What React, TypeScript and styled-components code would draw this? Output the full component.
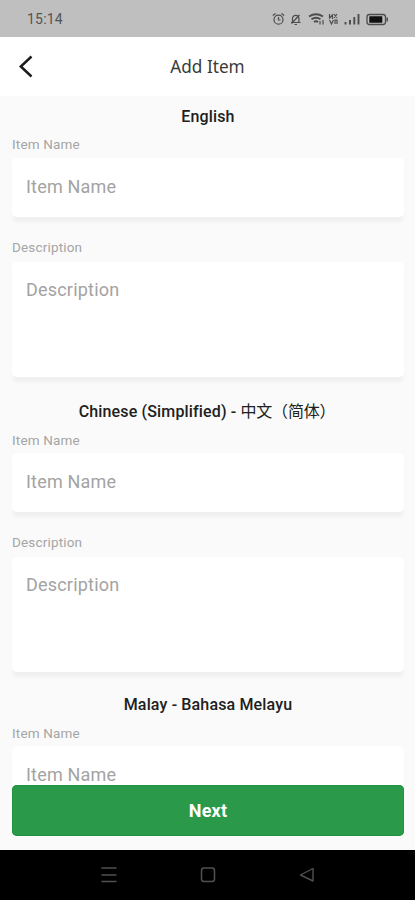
import React from "react";
import styled, { createGlobalStyle } from "styled-components";

const GlobalStyle = createGlobalStyle`
  * { box-sizing: border-box; }
  body { margin: 0; background: #fafafa; }
`;

const Screen = styled.div`
  display: flex;
  flex-direction: column;
  width: 415px;
  height: 900px;
  overflow: hidden;
  background: #fafafa;
  font-family: Roboto, "Noto Sans CJK SC", sans-serif;
`;

const StatusBar = styled.header`
  flex: none;
  display: flex;
  align-items: center;
  justify-content: space-between;
  height: 37px;
  padding: 1px 26px 0 27px;
  background: #bfbfbf;
  color: #545454;
`;

const Clock = styled.span`
  font-size: 14px;
  line-height: 16px;
  letter-spacing: 0.2px;
`;

const StatusIcons = styled.svg`
  display: block;
  width: 118px;
  height: 18px;
`;

const TitleBar = styled.div`
  flex: none;
  display: grid;
  grid-template-columns: 52px 1fr 52px;
  align-items: center;
  height: 59px;
  background: #fff;
`;

const BackButton = styled.button`
  display: flex;
  align-items: center;
  height: 100%;
  padding: 0 0 0 18px;
  border: 0;
  background: none;
`;

const PageTitle = styled.h1`
  margin: 0;
  text-align: center;
  font: 400 17.2px/24px "Noto Sans", sans-serif;
  color: #3a3a3a;
`;

const Form = styled.main`
  flex: 1;
  min-height: 0;
  overflow: hidden;
  padding: 11px 11px 0 12px;
`;

const Section = styled.section<{ $height?: number }>`
  height: ${(p) => (p.$height ? `${p.$height}px` : "auto")};
`;

const Language = styled.h2<{ $gap: number }>`
  margin: 0 0 ${(p) => p.$gap}px;
  height: 20px;
  text-align: center;
  font-size: 16px;
  font-weight: 500;
  line-height: 20px;
  letter-spacing: 0.15px;
  white-space: nowrap;
  color: #202020;
`;

const NativeName = styled.span`
  font-weight: 400;
  letter-spacing: -0.2px;
  margin-right: 2px;
`;

const Label = styled.label`
  display: block;
  height: 18px;
  font-size: 13.5px;
  line-height: 18px;
  letter-spacing: 0.17px;
  color: #a5a5a5;
`;

const Field = styled.div<{ $height: number; $gap: number; $inset: number }>`
  height: ${(p) => p.$height}px;
  margin-top: ${(p) => p.$gap}px;
  padding: ${(p) => p.$inset}px 14px 0;
  border-radius: 5px;
  background: #fff;
  box-shadow: 0 6px 3px -1px #f0f0f0;
  font-size: 18px;
  line-height: 22px;
  letter-spacing: 0.2px;
  color: #a3a3a3;
`;

const Spacer = styled.div`
  height: 21px;
`;

const Footer = styled.footer`
  flex: none;
  display: flex;
  height: 65px;
  padding: 0 11px 14px 12px;
`;

const NextButton = styled.button`
  flex: 1;
  padding: 0;
  border: 0;
  border-radius: 5px;
  background: #2a994a;
  box-shadow: inset 0 0 0 1px #20923f;
  color: #fff;
  font: 700 18px/22px Roboto, sans-serif;
  letter-spacing: 0.2px;
`;

const NavBar = styled.nav`
  flex: none;
  display: flex;
  justify-content: center;
  align-items: center;
  gap: 81px;
  height: 50px;
  background: #000;
`;

const sections = [
  { language: "English", native: "", height: 295, gap: 8, fieldGap: 5, description: true },
  { language: "Chinese (Simplified) - ", native: "中文（简体）", height: 293, gap: 9, fieldGap: 4, description: true },
  { language: "Malay - Bahasa Melayu", native: "", gap: 9, fieldGap: 4, description: false },
];

export default function App() {
  return (
    <Screen>
      <GlobalStyle />
      <StatusBar>
        <Clock>15:14</Clock>
        <StatusIcons viewBox="0 0 118 18" fill="none" stroke="#4c4c4c" strokeWidth="1.2">
          <g>
            <circle cx="7.5" cy="9.7" r="4.5" />
            <path d="M1.8 5.5 4.5 3.5M13.2 5.5 10.5 3.5M7.5 7v3h2" />
          </g>
          <g>
            <path d="M20 12.5h9.5M21.5 12V8.500a3.200 3.200 0 0 1 6.400 0V12M23.500 14.500h2.500M20.500 13.500 28.500 5" />
          </g>
          <g strokeWidth="1.9">
            <path d="M38 6.500q7-4.500 14 0M40.500 9.300q4.500-3 9 0M43 12q2-1.500 4 0" />
            <path d="M49 14.500v-3.500M52 10v4.500" strokeWidth="1.2" />
          </g>
          <g>
            <path d="M58.500 4v4l3-3v4M63 4l3 4M66 4l-3 4M58.500 10l2 4 2-4M64 14v-4h2v4" />
          </g>
          <g strokeWidth="1.9">
            <path d="M74.500 12v2.500M79 10v4.500M83.300 7v7.500M87.500 4v10.500" />
          </g>
          <g>
            <rect x="96" y="4.5" width="18.5" height="10" rx="2.5" strokeWidth="1.3" />
            <rect x="98.3" y="6.3" width="13" height="6.4" rx="0.5" fill="#111" stroke="none" />
            <path d="M116.200 7.500v4" strokeWidth="1.5" />
          </g>
        </StatusIcons>
      </StatusBar>
      <TitleBar>
        <BackButton aria-label="Back">
          <svg width="16" height="24" viewBox="0 0 16 24" fill="none" stroke="#1c1c1c" strokeWidth="2.5">
            <path d="M13.5 1.5 2.8 11.5 13.5 21.5" />
          </svg>
        </BackButton>
        <PageTitle>Add Item</PageTitle>
      </TitleBar>
      <Form>
        {sections.map((s) => (
          <Section key={s.language} $height={s.height}>
            <Language $gap={s.gap}>
              {s.language}
              {s.native && <NativeName>{s.native}</NativeName>}
            </Language>
            <Label>Item Name</Label>
            <Field $height={59} $gap={s.fieldGap} $inset={18}>Item Name</Field>
            {s.description && (
              <>
                <Spacer />
                <Label>Description</Label>
                <Field $height={115} $gap={6} $inset={17}>Description</Field>
              </>
            )}
          </Section>
        ))}
      </Form>
      <Footer>
        <NextButton>Next</NextButton>
      </Footer>
      <NavBar>
        <svg width="18" height="18" viewBox="0 0 18 18" stroke="#505050" strokeWidth="1.5">
          <path d="M1.5 2h15M1.5 9h15M1.5 15.5h15" />
        </svg>
        <svg width="18" height="18" viewBox="0 0 18 18" fill="none" stroke="#505050" strokeWidth="1.5">
          <rect x="2.5" y="2" width="13" height="13.5" rx="2.5" />
        </svg>
        <svg width="18" height="18" viewBox="0 0 18 18" fill="none" stroke="#505050" strokeWidth="1.4" strokeLinejoin="round">
          <path d="M15 2.5v12.5L2.5 9Z" />
        </svg>
      </NavBar>
    </Screen>
  );
}
